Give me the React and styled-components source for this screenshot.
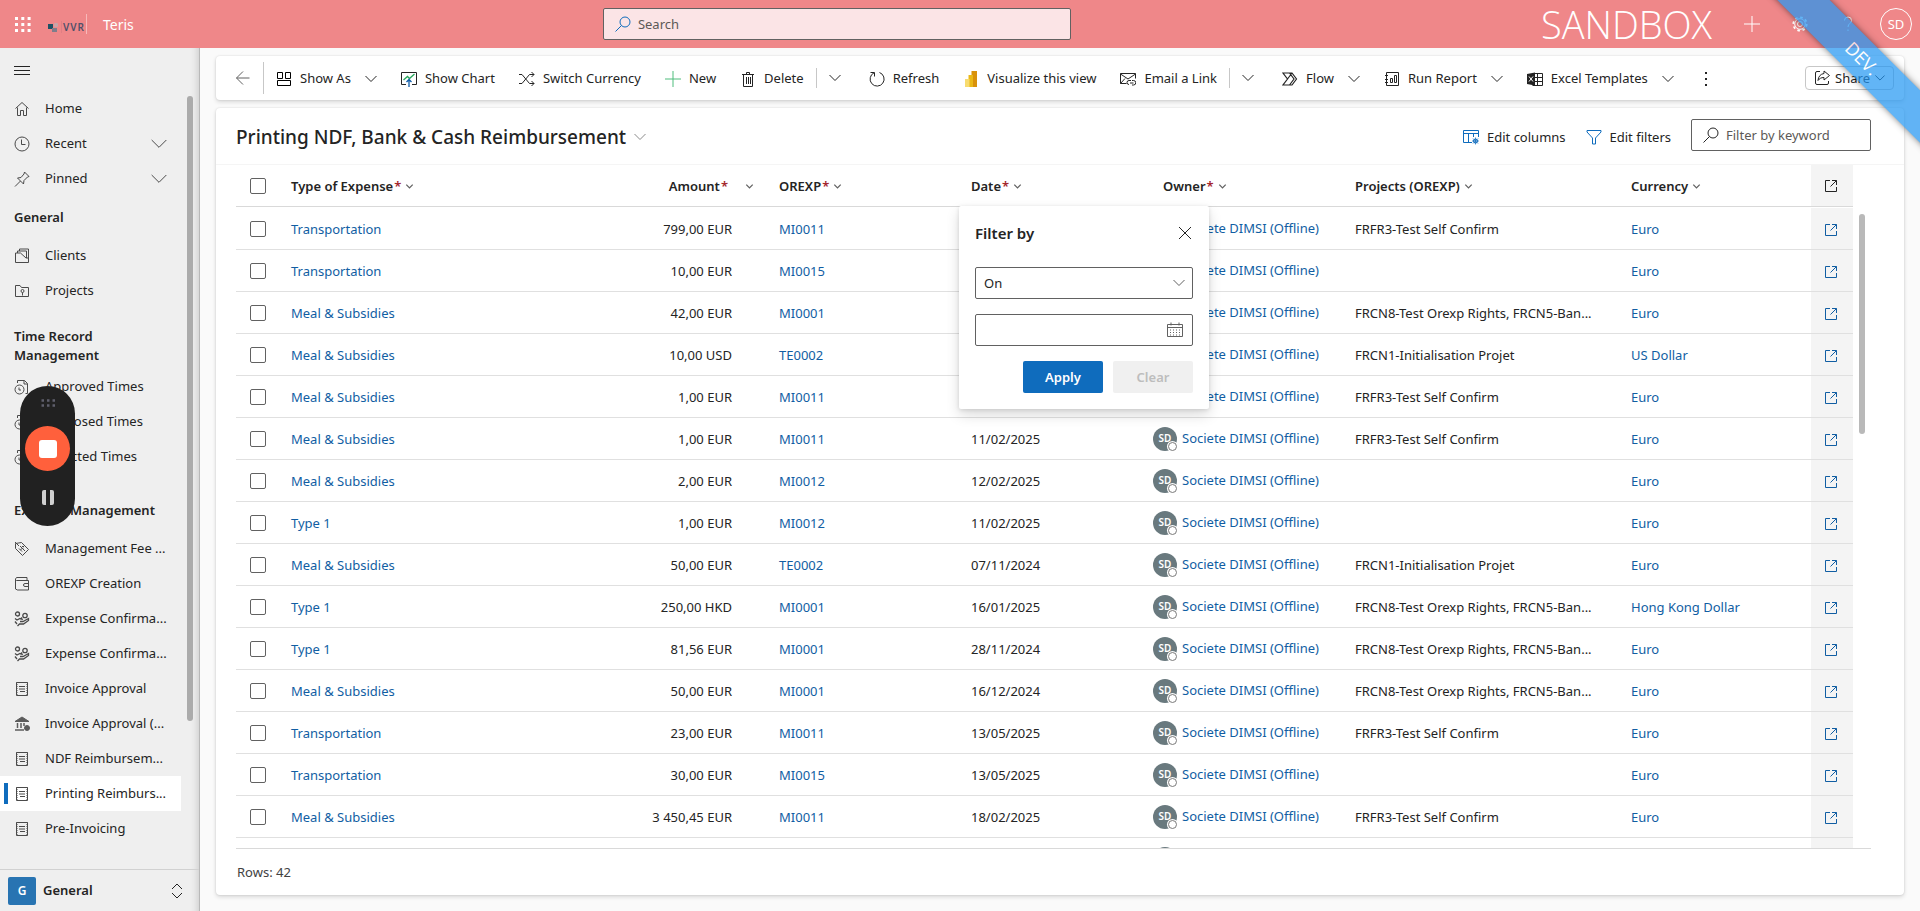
import { styled, createGlobalStyle } from "styled-components";

const GlobalStyle = createGlobalStyle`
  *, *::before, *::after {
    box-sizing: border-box;
  }

  :root {
    --color-brand: #ef8789;
    --color-text: #242424;
    --color-link: #115ea3;
    --color-accent: #0f6cbd;
    --color-line: #e0e0e0;
    --color-border: #616161;
    --color-nav: #efefef;
  }

  body {
    margin: 0;
    background-color: #fafafa;
    color: var(--color-text);
    font-family: "Noto Sans", "Open Sans", sans-serif;
    font-size: 13px;
    line-height: 19px;
  }

  button, input, select {
    font: inherit;
    color: inherit;
  }

  button {
    padding: 0;
    border: none;
    background: none;
    cursor: pointer;
  }

  a {
    color: var(--color-link);
    text-decoration: none;
  }
`;

/* ---------- icons ---------- */

const Svg = styled.svg`
  flex: none;
  display: block;
  fill: none;
  stroke: currentColor;
  stroke-width: 1;
`;

const ICONS = {
  home: <path d="M1.500 7.500L8 1.500l6.500 6M3.500 6.500v8h3v-5h3v5h3v-8" />,
  recent: (
    <>
      <circle cx="8" cy="8" r="7" />
      <path d="M7.500 3.500v5h4" />
    </>
  ),
  pin: <path d="M10.500 1l4.500 4.500-1.500.5-3.500 3.500-.5 3.500-6-6 3.500-.5L10 3zM6.500 10L1 15.500" />,
  clients: <path d="M1.500 5v9.500h13V10H12L6.500 5zM3.500 5V3h9v7M5.500 3V1h9v9" />,
  folder: (
    <>
      <path d="M1.500 13.500v-11H6l1.500 2h7v9z" />
      <circle cx="8.500" cy="8" r="1.500" />
      <path d="M8.500 9.500v3" />
    </>
  ),
  timeDoc: (
    <>
      <circle cx="5.500" cy="10.500" r="4.500" />
      <path d="M5 8.500v2.500h2M3.500 4V1.500h7l3 3v10h-2M10 1.500V5h3.500" />
    </>
  ),
  tag: (
    <>
      <path d="M1.500 2.500l6-1 7 7-6 6-7-7zM1 1l4 4" />
      <path d="M6 5l5 5M5 7.500l3 3M8 5.500l2 0M6.500 8.500l3-1.500" />
    </>
  ),
  wallet: (
    <>
      <path d="M2.500 4.500h12v9.500h-11L1.500 13V3l1-1.500h10.500v3M1.500 3.500l1 1" />
      <path d="M14.500 7.500H11a1.500 1.500 0 000 3h3.500" />
    </>
  ),
  handCoins: (
    <g strokeWidth="1.300">
      <circle cx="3.500" cy="3" r="2" />
      <circle cx="11" cy="4.500" r="2.200" />
      <path d="M1 7.500l2 1.500 3-1.500 3 1M6 10.500h3l5.500-3v2L9.500 13H5.500l-2 2M1 10.500l2 2.500M8 6.500l-1.500 2" />
    </g>
  ),
  invoice: (
    <>
      <path d="M2.500 1.500h11v13h-11z" />
      <path d="M3 1v14M13 1v14" strokeDasharray="1 1" />
      <path d="M5 5.500h6M5 8h6M6 10.500h5" />
    </>
  ),
  bank: (
    <g color="#5c5c5c">
      <path d="M1 5.500L8 1l7 4.500z" fill="currentColor" />
      <path d="M3.500 7v5M7 7v5M10 7v3" strokeWidth="1.500" />
      <path d="M1 14h9" strokeWidth="1.500" />
      <circle cx="13" cy="12" r="2.500" fill="currentColor" />
    </g>
  ),
  back: <path d="M14.500 8H1.500M8 1.500L1.500 8 8 14.500" />,
  showAs: <path d="M1.500 1.500h5v6h-5zM9.500 1.500h5v6h-5zM1.500 9.500h13v5h-13z" stroke="#000" />,
  chart: (
    <>
      <path d="M5 13.500H.5v-12h15v12H11" />
      <path d="M2.500 9l4-3.500 2 2 5-4.500" stroke="#27a75c" strokeWidth="1.300" />
      <path d="M8 16V9M5.500 11L8 8.500l2.500 2.500" stroke="#0f5ba8" strokeWidth="1.300" />
    </>
  ),
  shuffle: <path d="M0 12.500h3l7.500-9H15M0 3.500h3l7.500 9H15M12.500 1L15 3.500 12.500 6M12.500 10l2.500 2.500L12.500 15" />,
  plus: <path d="M8 0v16M0 8h16" />,
  trash: <path d="M2 3.500h12M6.500 3V1.500h3V3M3.500 3.500v12h9v-12M6.500 6v7M8.500 6v7M10.500 6v7" />,
  refresh: <path d="M10.500 1.500A7 7 0 115 1.800M1.500 1.500H5.500V5.500" />,
  powerBi: (
    <g stroke="none">
      <path d="M8.500 0H14v16H8.500z" fill="#d9920b" />
      <path d="M5.500 4H10v12H5.500z" fill="#eab818" />
      <path d="M2 8h4.500v8H2z" fill="#f8dc70" />
    </g>
  ),
  mailLink: (
    <>
      <path d="M6.500 12.500H.5v-10h15v5M.5 3L8 8l7.500-5M.5 12.500L5 7.500" />
      <path d="M9 13.500a2 2 0 010-4h2M12 9.500h1.500a2 2 0 010 4.500H12M10 12h3.500" />
    </>
  ),
  flow: <path d="M1 2h9l4.500 6-4.500 6H1l4.500-6zM7.500 2L12 8l-4.500 6M1 14L10 2" strokeWidth="1.200" />,
  report: (
    <>
      <path d="M2.500 1.500h12v13h-12zM1 4.500h3M1 8.500h3M1 11.500h3" />
      <path d="M6.500 7.500h2v4h-2zM10.500 4.500h2v7h-2z" />
    </>
  ),
  excel: (
    <>
      <path d="M5.500 2.500h10v12h-10M5.500 6.500h10M5.500 10.500h10M10.500 2.500v12" />
      <path d="M0 3l8-1.500v13L0 13z" fill="currentColor" stroke="none" />
      <path d="M2 5.500l4 5M6 5.500l-4 5" stroke="#fff" />
    </>
  ),
  more: <path d="M8 1v2M8 7v2M8 13v2" strokeWidth="2" />,
  share: (
    <>
      <path d="M6 1.500H3a1.500 1.500 0 00-1.500 1.500v10A1.500 1.500 0 003 14.500h10a1.500 1.500 0 001.500-1.500v-2" />
      <path d="M10 1l5.500 4.500L10 10V7.500c-3 0-4.500 1-6 3 .3-4 2.500-6.500 6-7z" />
    </>
  ),
  columns: (
    <>
      <path d="M9 13.500H.5v-12h15V8M.5 4.500h15M5.500 4.500v9M10.500 4.500V8" />
      <circle cx="12.500" cy="12" r="2" />
      <path d="M12.500 8.500v7M9 12h7M10 9.500l5 5M15 9.500l-5 5" strokeWidth=".7" />
    </>
  ),
  filter: <path d="M1 1.500h14v1.500L9.500 9v6h-3V9L1 3z" />,
  search: (
    <>
      <circle cx="10" cy="6" r="5" />
      <path d="M6.500 9.500L.5 15.500" />
    </>
  ),
  close: <path d="M2 2l12 12M14 2L2 14" />,
  open: (
    <>
      <path d="M7 2.500H2.500v11h11V9" />
      <path d="M9 2.500h4.500V7M13.500 2.500l-6 6" />
    </>
  ),
  calendar: (
    <>
      <path d="M.5 2.500h15v12H.5zM.5 5.500h15M4 .5v3M12 .5v3" />
      <path d="M3 8h10.500M3 10.500h10.500M3 13h10.500" strokeDasharray="1 2" />
    </>
  ),
  gear: (
    <>
      <circle cx="8" cy="8" r="2.500" />
      <circle cx="8" cy="8" r="5.300" />
      <circle cx="8" cy="8" r="6.700" strokeDasharray="2.600 2.660" strokeWidth="1.800" />
    </>
  ),
  help: <path d="M4.500 4.500a3.500 3.500 0 117 0c0 3-3.500 3-3.500 6.500M8 13.500v1.500" />,
  menu: <path d="M0 4.500h16M0 8.500h16M0 12.500h16" />,
  waffle: (
    <path
      d="M0 2.500h16M0 8.500h16M0 14.500h16"
      strokeDasharray="3 3.300"
      strokeWidth="3"
    />
  ),
};

function Icon({ name, size = 16, color }) {
  return (
    <Svg width={size} height={size} viewBox="0 0 16 16" color={color} aria-hidden="true">
      {ICONS[name]}
    </Svg>
  );
}

function Chevron({ size = 12, bold, color }) {
  return (
    <Svg width={size} height={size} viewBox="0 0 12 12" color={color} aria-hidden="true">
      <path d={bold ? "M2.500 4l3.500 3.500L9.500 4" : "M.5 3L6 8.500 11.500 3"} strokeWidth={bold ? 1.4 : 12 / size} />
    </Svg>
  );
}

/* ---------- top bar ---------- */

const Page = styled.div`
  position: relative;
  display: flex;
  flex-direction: column;
  height: 100vh;
  overflow: hidden;
`;

const StyledHeader = styled.header`
  display: grid;
  grid-template-columns: 71fr 468px 100fr;
  align-items: center;
  flex: none;
  height: 48px;
  background-color: var(--color-brand);
  color: #fff;
`;

const HeaderLeft = styled.div`
  display: flex;
  align-items: center;
  padding-left: 15px;
`;

const LogoLink = styled.a`
  display: flex;
  height: 20px;
  margin: 0 16px;
  border-right: 1px solid #f7b9ba;
`;

const AppName = styled.span`
  font-size: 14px;
`;

const HeaderRight = styled.div`
  display: flex;
  align-items: center;
  justify-content: flex-end;
  padding-right: 8px;
`;

const EnvironmentName = styled.span`
  font-family: "Open Sans", sans-serif;
  font-weight: 300;
  font-size: 38px;
  line-height: 48px;
  margin-right: 16px;
`;

const HeaderButton = styled.button`
  display: flex;
  align-items: center;
  justify-content: center;
  width: 48px;
  height: 48px;
`;

const Account = styled.button`
  width: 32px;
  height: 32px;
  margin-left: 8px;
  border: 1px solid #fff;
  border-radius: 50%;
`;

const SearchBox = styled.label`
  display: flex;
  align-items: center;
  gap: 7px;
  height: 32px;
  padding: 0 11px;
  border: 1px solid var(--color-border);
  border-radius: 2px;
  background-color: ${(props) => (props.$tinted ? "#fbe4e6" : "#fff")};
  color: ${(props) => (props.$tinted ? "var(--color-accent)" : "var(--color-text)")};
  width: ${(props) => (props.$tinted ? "auto" : "180px")};
`;

const SearchInput = styled.input`
  flex: 1;
  min-width: 0;
  padding: 0;
  border: none;
  outline: none;
  background: none;

  &::placeholder {
    color: #5c5957;
    opacity: 1;
  }
`;

function Logo() {
  return (
    <svg width="39" height="20" viewBox="0 0 39 20" aria-hidden="true">
      <rect x="1" y="10" width="5" height="5" fill="#1d5265" />
      <rect x="7" y="9" width="4" height="4" rx="1" fill="#c9a4a8" />
      <rect x="5" y="14" width="5" height="4" fill="#7f7d8b" />
      <path d="M14.500 7v12" stroke="#e07f83" />
      <text x="16" y="17" fontSize="10" fontWeight="600" fill="#51506a" letterSpacing="1">
        VVR
      </text>
    </svg>
  );
}

function Header() {
  return (
    <StyledHeader>
      <HeaderLeft>
        <button aria-label="App launcher">
          <Icon name="waffle" />
        </button>
        <LogoLink href="#" aria-label="Company">
          <Logo />
        </LogoLink>
        <AppName>Teris</AppName>
      </HeaderLeft>
      <SearchBox $tinted>
        <Icon name="search" />
        <SearchInput placeholder="Search" aria-label="Search" />
      </SearchBox>
      <HeaderRight>
        <EnvironmentName>SANDBOX</EnvironmentName>
        <HeaderButton aria-label="Create">
          <Icon name="plus" />
        </HeaderButton>
        <HeaderButton aria-label="Settings">
          <Icon name="gear" />
        </HeaderButton>
        <HeaderButton aria-label="Help">
          <Icon name="help" />
        </HeaderButton>
        <Account aria-label="Account">SD</Account>
      </HeaderRight>
    </StyledHeader>
  );
}

/* ---------- left navigation ---------- */

const StyledNav = styled.nav`
  display: flex;
  flex-direction: column;
  flex: none;
  width: 200px;
  background-color: var(--color-nav);
  border-right: 1px solid #b8b8b8;
  box-shadow: inset -10px 0 10px -10px rgba(0, 0, 0, 0.2);
`;

const NavToggle = styled.button`
  display: flex;
  align-items: center;
  flex: none;
  height: 43px;
  padding-left: 14px;
`;

const NavBody = styled.div`
  display: flex;
  flex: 1;
  min-height: 0;
  overflow: hidden;
`;

const NavScroll = styled.div`
  flex: 1;
  min-width: 0;
  overflow: hidden;
`;

const ScrollTrack = styled.div`
  flex: none;
  width: 18px;
  padding: ${(props) => (props.$grid ? "49px 6px 0" : "5px 6px 0")};
`;

const ScrollThumb = styled.div`
  width: 6px;
  height: ${(props) => (props.$grid ? "220px" : "625px")};
  border-radius: 3px;
  background-color: ${(props) => (props.$grid ? "#b9b9b9" : "#ababab")};
`;

const NavGroup = styled.ul`
  list-style: none;
  margin: ${(props) => (props.$spaced ? "15px 0 0" : "0")};
  padding: 0;
`;

const GroupTitle = styled.h2`
  display: flex;
  align-items: center;
  min-height: 42px;
  margin: 0;
  padding: 4px 60px 4px 14px;
  font-size: 13px;
  font-weight: 600;
  line-height: 19px;
  white-space: ${(props) => (props.$wrap ? "normal" : "nowrap")};
`;

const NavLink = styled.a`
  position: relative;
  display: flex;
  align-items: center;
  height: 35px;
  padding: 0 14px;
  gap: 15px;
  color: #4a4a4a;
  background-color: ${(props) => (props.$active ? "#fff" : "transparent")};

  &::before {
    content: "";
    position: absolute;
    left: 4px;
    width: 4px;
    height: 21px;
    background-color: ${(props) => (props.$active ? "var(--color-accent)" : "transparent")};
  }
`;

const NavLabel = styled.span`
  flex: 1;
  color: var(--color-text);
  white-space: nowrap;
`;

const AreaSwitcher = styled.button`
  display: flex;
  align-items: center;
  flex: none;
  gap: 7px;
  height: 42px;
  padding: 0 16px 0 8px;
  border-top: 1px solid #d1d1d1;
  font-weight: 600;
`;

const AreaBadge = styled.span`
  display: flex;
  align-items: center;
  justify-content: center;
  width: 28px;
  height: 28px;
  border-radius: 2px;
  background-color: #2874b2;
  color: #fff;
  font-size: 12px;
`;

const AreaName = styled.span`
  flex: 1;
  text-align: left;
`;

const navGroups = [
  {
    items: [
      { icon: "home", label: "Home" },
      { icon: "recent", label: "Recent", expandable: true },
      { icon: "pin", label: "Pinned", expandable: true },
    ],
  },
  {
    title: "General",
    items: [
      { icon: "clients", label: "Clients" },
      { icon: "folder", label: "Projects" },
    ],
  },
  {
    title: "Time Record Management",
    spaced: true,
    wrap: true,
    items: [
      { icon: "timeDoc", label: "Approved Times" },
      { icon: "timeDoc", label: "Proposed Times" },
      { icon: "timeDoc", label: "Rejected Times" },
    ],
  },
  {
    title: "Expense Management",
    spaced: true,
    items: [
      { icon: "tag", label: "Management Fee ..." },
      { icon: "wallet", label: "OREXP Creation" },
      { icon: "handCoins", label: "Expense Confirma..." },
      { icon: "handCoins", label: "Expense Confirma..." },
      { icon: "invoice", label: "Invoice Approval" },
      { icon: "bank", label: "Invoice Approval (..." },
      { icon: "invoice", label: "NDF Reimbursem..." },
      { icon: "invoice", label: "Printing Reimburs...", active: true },
      { icon: "invoice", label: "Pre-Invoicing" },
    ],
  },
];

function Navigation() {
  return (
    <StyledNav>
      <NavToggle aria-label="Collapse navigation">
        <Icon name="menu" />
      </NavToggle>
      <NavBody>
        <NavScroll>
          {navGroups.map((group, g) => (
            <NavGroup key={g} $spaced={group.spaced}>
              {group.title && <GroupTitle $wrap={group.wrap}>{group.title}</GroupTitle>}
              {group.items.map((item, i) => (
                <li key={i}>
                  <NavLink href="#" $active={item.active}>
                    <Icon name={item.icon} />
                    <NavLabel>{item.label}</NavLabel>
                    {item.expandable && <Chevron size={16} />}
                  </NavLink>
                </li>
              ))}
            </NavGroup>
          ))}
        </NavScroll>
        <ScrollTrack>
          <ScrollThumb />
        </ScrollTrack>
      </NavBody>
      <AreaSwitcher>
        <AreaBadge>G</AreaBadge>
        <AreaName>General</AreaName>
        <Svg width="12" height="16" viewBox="0 0 12 16" aria-hidden="true">
          <path d="M1 6l5-5 5 5M1 10l5 5 5-5" />
        </Svg>
      </AreaSwitcher>
    </StyledNav>
  );
}

/* ---------- command bar ---------- */

const CommandBar = styled.div`
  display: flex;
  align-items: center;
  flex: none;
  height: 44px;
  padding: 0 10px 0 16px;
  border-radius: 4px;
  background-color: #fff;
  box-shadow: 0 0 2px rgba(0, 0, 0, 0.12), 0 2px 4px rgba(0, 0, 0, 0.14);
`;

const BackButton = styled.button`
  display: flex;
  align-items: center;
  height: 32px;
  padding: 0 12px 0 3px;
  border-right: 1px solid #c7c7c7;
  color: #616161;
`;

const CommandButton = styled.button`
  display: flex;
  align-items: center;
  gap: 8px;
  height: 32px;
  padding: 1px 12px 0;
  white-space: nowrap;
`;

const SplitButton = styled.button`
  display: flex;
  align-items: center;
  height: 20px;
  padding: 0 16px 0 12px;
  border-left: 1px solid #c7c7c7;
`;

const CommandChevron = styled.span`
  margin-left: 6px;
`;

const ShareButton = styled.button`
  display: flex;
  align-items: center;
  gap: 5px;
  height: 24px;
  margin-left: auto;
  padding: 0 8px;
  border: 1px solid #c7c7c7;
  border-radius: 4px;
`;

const commands = [
  { icon: "showAs", label: "Show As", menu: true },
  { icon: "chart", label: "Show Chart" },
  { icon: "shuffle", label: "Switch Currency" },
  { icon: "plus", label: "New", color: "#4fbd7c" },
  { icon: "trash", label: "Delete", split: true },
  { icon: "refresh", label: "Refresh" },
  { icon: "powerBi", label: "Visualize this view" },
  { icon: "mailLink", label: "Email a Link", split: true },
  { icon: "flow", label: "Flow", menu: true },
  { icon: "report", label: "Run Report", menu: true },
  { icon: "excel", label: "Excel Templates", menu: true },
];

function Commands() {
  return (
    <CommandBar>
      <BackButton aria-label="Back">
        <Icon name="back" />
      </BackButton>
      {commands.map((command) => (
        <Command key={command.label} {...command} />
      ))}
      <CommandButton aria-label="More commands">
        <Icon name="more" />
      </CommandButton>
      <ShareButton>
        <Icon name="share" />
        Share
        <Chevron size={10} />
      </ShareButton>
    </CommandBar>
  );
}

function Command({ icon, label, color, menu, split }) {
  return (
    <>
      <CommandButton>
        <Icon name={icon} color={color} />
        {label}
        {menu && (
          <CommandChevron>
            <Chevron />
          </CommandChevron>
        )}
      </CommandButton>
      {split && (
        <SplitButton aria-label={`${label} options`}>
          <Chevron />
        </SplitButton>
      )}
    </>
  );
}

/* ---------- grid ---------- */

const Layout = styled.div`
  display: flex;
  flex: 1;
  min-height: 0;
`;

const Main = styled.main`
  display: flex;
  flex-direction: column;
  flex: 1;
  gap: 8px;
  min-width: 0;
  padding: 8px 16px 16px;
`;

const Card = styled.section`
  display: flex;
  flex-direction: column;
  flex: 1;
  min-height: 0;
  border-radius: 4px;
  background-color: #fff;
  box-shadow: 0 0 2px rgba(0, 0, 0, 0.12), 0 2px 4px rgba(0, 0, 0, 0.14);
`;

const CardHeader = styled.div`
  display: flex;
  align-items: center;
  flex: none;
  gap: 20px;
  height: 57px;
  padding: 0 33px 2px 20px;
  border-bottom: 1px solid #f5f5f5;
`;

const ViewSelector = styled.button`
  display: flex;
  align-items: center;
  gap: 8px;
  margin-right: auto;
  padding-top: 4px;
`;

const ViewTitle = styled.h1`
  margin: 0;
  font-size: 19px;
  font-weight: 500;
  line-height: 28px;
`;

const ViewAction = styled.button`
  display: flex;
  align-items: center;
  gap: 8px;
  padding-top: 4px;

  svg {
    color: var(--color-accent);
  }
`;

const GridArea = styled.div`
  display: flex;
  flex: 1;
  min-height: 0;
  margin: 0 33px 0 20px;
  border-bottom: 1px solid #d9d9d9;
`;

const GridScroll = styled.div`
  flex: 1;
  min-width: 0;
  overflow: hidden;
`;

const Table = styled.table`
  width: 100%;
  table-layout: fixed;
  border-collapse: separate;
  border-spacing: 0;
`;

const HeadCell = styled.th`
  position: relative;
  height: 42px;
  padding: 1px 12px 0;
  border-bottom: 1px solid #d9d9d9;
  background-color: ${(props) => (props.$shaded ? "#f4f4f4" : "#fff")};
  font-weight: 600;
  text-align: left;
`;

const SelectHeadCell = styled(HeadCell)`
  padding: 1px 14px 0;
`;

const SortButton = styled.button`
  display: flex;
  align-items: center;
  margin-left: ${(props) => (props.$end ? "auto" : "0")};
  font-weight: 600;
  white-space: nowrap;

  svg {
    margin-left: ${(props) => (props.$end ? "16px" : "3px")};
    color: #616161;
  }
`;

const Required = styled.span`
  margin-left: 1px;
  color: #a4262c;
`;

const Row = styled.tr`
  &:first-child td {
    border-top: 1px solid #fff;
  }
`;

const Cell = styled.td`
  height: 42px;
  padding: ${(props) => (props.$end ? "2px 35px 0 12px" : "2px 12px 0")};
  border-bottom: 1px solid var(--color-line);
  background-color: ${(props) => (props.$shaded ? "#f4f4f4" : "#fff")};
  text-align: ${(props) => (props.$end ? "right" : "left")};
  white-space: nowrap;
  overflow: hidden;

  ${Row}:first-child & {
    height: 43px;
  }
`;

const SelectCell = styled(Cell)`
  padding: 0 14px;
`;

const OwnerCell = styled(Cell)`
  padding: 0 2px;
`;

const Checkbox = styled.input.attrs({ type: "checkbox" })`
  display: block;
  appearance: none;
  width: 16px;
  height: 16px;
  margin: 0;
  border: 1px solid var(--color-border);
  border-radius: 2px;
  background-color: #fff;
`;

const OwnerLink = styled.a`
  display: flex;
  align-items: center;
  gap: 5px;
`;

const Persona = styled.span`
  position: relative;
  display: flex;
  align-items: center;
  justify-content: center;
  width: 24px;
  height: 24px;
  border-radius: 50%;
  background-color: #69797e;
  color: #fff;
  font-size: 10px;
  font-weight: 600;

  &::after {
    content: "";
    position: absolute;
    right: 0;
    bottom: 0;
    width: 9px;
    height: 9px;
    border: 1px solid #7a7a7a;
    border-radius: 50%;
    background-color: #fff;
    box-shadow: 0 0 0 1px #fff;
  }
`;

const CardFooter = styled.footer`
  flex: none;
  padding: 14px 21px 13px;
  color: #424242;
`;

const columns = [
  { label: "Type of Expense", required: true, width: 296 },
  { label: "Amount", required: true, end: true, width: 192 },
  { label: "OREXP", required: true, width: 192 },
  { label: "Date", required: true, width: 192, filter: true },
  { label: "Owner", required: true, width: 192 },
  { label: "Projects (OREXP)", width: 276 },
  { label: "Currency", width: 192 },
];

const OWNER = "Societe DIMSI (Offline)";

const rows = [
  ["Transportation", "799,00 EUR", "MI0011", "", "FRFR3-Test Self Confirm", "Euro"],
  ["Transportation", "10,00 EUR", "MI0015", "", "", "Euro"],
  ["Meal & Subsidies", "42,00 EUR", "MI0001", "", "FRCN8-Test Orexp Rights, FRCN5-Ban...", "Euro"],
  ["Meal & Subsidies", "10,00 USD", "TE0002", "", "FRCN1-Initialisation Projet", "US Dollar"],
  ["Meal & Subsidies", "1,00 EUR", "MI0011", "", "FRFR3-Test Self Confirm", "Euro"],
  ["Meal & Subsidies", "1,00 EUR", "MI0011", "11/02/2025", "FRFR3-Test Self Confirm", "Euro"],
  ["Meal & Subsidies", "2,00 EUR", "MI0012", "12/02/2025", "", "Euro"],
  ["Type 1", "1,00 EUR", "MI0012", "11/02/2025", "", "Euro"],
  ["Meal & Subsidies", "50,00 EUR", "TE0002", "07/11/2024", "FRCN1-Initialisation Projet", "Euro"],
  ["Type 1", "250,00 HKD", "MI0001", "16/01/2025", "FRCN8-Test Orexp Rights, FRCN5-Ban...", "Hong Kong Dollar"],
  ["Type 1", "81,56 EUR", "MI0001", "28/11/2024", "FRCN8-Test Orexp Rights, FRCN5-Ban...", "Euro"],
  ["Meal & Subsidies", "50,00 EUR", "MI0001", "16/12/2024", "FRCN8-Test Orexp Rights, FRCN5-Ban...", "Euro"],
  ["Transportation", "23,00 EUR", "MI0011", "13/05/2025", "FRFR3-Test Self Confirm", "Euro"],
  ["Transportation", "30,00 EUR", "MI0015", "13/05/2025", "", "Euro"],
  ["Meal & Subsidies", "3 450,45 EUR", "MI0011", "18/02/2025", "FRFR3-Test Self Confirm", "Euro"],
  ["", "", "", "", "", ""],
];

function ExpenseGrid() {
  return (
    <Table>
      <colgroup>
        <col width="43" />
        {columns.map((column) => (
          <col key={column.label} width={column.width} />
        ))}
        <col width="42" />
      </colgroup>
      <thead>
        <tr>
          <SelectHeadCell>
            <Checkbox aria-label="Select all rows" />
          </SelectHeadCell>
          {columns.map((column) => (
            <HeadCell key={column.label}>
              <SortButton $end={column.end}>
                {column.label}
                {column.required && <Required>*</Required>}
                <Chevron size={11} bold />
              </SortButton>
              {column.filter && <DateFilter />}
            </HeadCell>
          ))}
          <HeadCell $shaded>
            <Icon name="open" />
          </HeadCell>
        </tr>
      </thead>
      <tbody>
        {rows.map((row, i) => (
          <ExpenseRow key={i} row={row} />
        ))}
      </tbody>
    </Table>
  );
}

function ExpenseRow({ row }) {
  const [type, amount, orexp, date, projects, currency] = row;
  return (
    <Row>
      <SelectCell>
        <Checkbox aria-label="Select row" />
      </SelectCell>
      <Cell>
        <a href="#">{type}</a>
      </Cell>
      <Cell $end>{amount}</Cell>
      <Cell>
        <a href="#">{orexp}</a>
      </Cell>
      <Cell>{date}</Cell>
      <OwnerCell>
        <OwnerLink href="#">
          <Persona>{type && "SD"}</Persona>
          {type && OWNER}
        </OwnerLink>
      </OwnerCell>
      <Cell>{projects}</Cell>
      <Cell>
        <a href="#">{currency}</a>
      </Cell>
      <Cell $shaded>
        {type && (
          <a href="#" aria-label="Open record">
            <Icon name="open" />
          </a>
        )}
      </Cell>
    </Row>
  );
}

/* ---------- date filter callout ---------- */

const Callout = styled.div`
  position: absolute;
  top: 41px;
  left: 0;
  z-index: 5;
  width: 250px;
  padding: 16px;
  border-radius: 2px;
  background-color: #fff;
  box-shadow: 0 6px 14px rgba(0, 0, 0, 0.14), 0 1px 4px rgba(0, 0, 0, 0.12);
`;

const CalloutHeader = styled.div`
  display: flex;
  align-items: center;
  justify-content: space-between;
  height: 22px;
  margin-bottom: 23px;
  font-size: 15px;
`;

const Field = styled.div`
  position: relative;
  display: flex;
  align-items: center;
  height: 32px;
  margin-bottom: 15px;
  border: 1px solid var(--color-border);
  border-radius: 2px;
  font-weight: 400;
`;

const FieldIcon = styled.span`
  position: absolute;
  right: ${(props) => props.$inset || 7}px;
  color: #616161;
  pointer-events: none;
`;

const Select = styled.select`
  appearance: none;
  width: 100%;
  height: 100%;
  padding: 0 8px;
  border: none;
  outline: none;
  background: none;
`;

const DateInput = styled.input`
  width: 100%;
  height: 100%;
  padding: 0 32px 0 8px;
  border: none;
  outline: none;
  background: none;
`;

const CalloutActions = styled.div`
  display: flex;
  justify-content: flex-end;
  gap: 10px;
`;

const CalloutButton = styled.button`
  width: 80px;
  height: 32px;
  border-radius: 2px;
  background-color: ${(props) => (props.disabled ? "#f0f0f0" : "var(--color-accent)")};
  color: ${(props) => (props.disabled ? "#bdbdbd" : "#fff")};
  font-weight: 600;
`;

function DateFilter() {
  return (
    <Callout>
      <CalloutHeader>
        Filter by
        <button aria-label="Close">
          <Icon name="close" />
        </button>
      </CalloutHeader>
      <Field>
        <Select aria-label="Filter operator" defaultValue="on">
          <option value="on">On</option>
        </Select>
        <FieldIcon>
          <Chevron />
        </FieldIcon>
      </Field>
      <Field>
        <DateInput type="text" aria-label="Date" />
        <FieldIcon $inset={9}>
          <Icon name="calendar" />
        </FieldIcon>
      </Field>
      <CalloutActions>
        <CalloutButton>Apply</CalloutButton>
        <CalloutButton disabled>Clear</CalloutButton>
      </CalloutActions>
    </Callout>
  );
}

/* ---------- overlays ---------- */

const RibbonCorner = styled.div`
  position: absolute;
  top: 0;
  right: 0;
  z-index: 10;
  width: 200px;
  height: 200px;
  overflow: hidden;
  pointer-events: none;
`;

const Ribbon = styled.div`
  position: absolute;
  top: 40px;
  left: 2px;
  width: 280px;
  transform: rotate(45deg);
  background-color: #2196f3;
  box-shadow: 0 0 6px rgba(0, 0, 0, 0.7);
  color: #fff;
  font-family: "Open Sans", sans-serif;
  font-size: 18px;
  font-weight: 500;
  line-height: 37px;
  text-align: center;
  opacity: 0.7;
`;

const Recorder = styled.div`
  position: absolute;
  top: 386px;
  left: 20px;
  z-index: 10;
  display: flex;
  flex-direction: column;
  align-items: center;
  justify-content: space-between;
  width: 55px;
  height: 140px;
  padding: 13px 0 21px;
  border-radius: 28px;
  background-color: #212121;
`;

const StopButton = styled.button`
  display: flex;
  align-items: center;
  justify-content: center;
  width: 45px;
  height: 45px;
  border-radius: 50%;
  background-color: #ff603c;

  &::before {
    content: "";
    width: 18px;
    height: 18px;
    border-radius: 3px;
    background-color: #fff;
  }
`;

const PauseButton = styled.button`
  width: 12px;
  height: 15px;
  border: solid #d0d0d0;
  border-width: 0 4px;
  border-radius: 2px;
`;

function ScreenRecorder() {
  return (
    <Recorder>
      <Svg width="14" height="8" viewBox="0 0 14 8" color="#5f5f6c" aria-hidden="true">
        <path d="M.5 1.500h14M.5 6.500h14" strokeWidth="2.500" strokeDasharray="2.500 3" />
      </Svg>
      <StopButton aria-label="Stop recording" />
      <PauseButton aria-label="Pause recording" />
    </Recorder>
  );
}

function App() {
  return (
    <Page>
      <GlobalStyle />
      <Header />
      <Layout>
        <Navigation />
        <Main>
          <Commands />
          <Card>
            <CardHeader>
              <ViewSelector>
                <ViewTitle>Printing NDF, Bank &amp; Cash Reimbursement</ViewTitle>
                <Chevron color="#8a8a8a" />
              </ViewSelector>
              <ViewAction>
                <Icon name="columns" />
                Edit columns
              </ViewAction>
              <ViewAction>
                <Icon name="filter" />
                Edit filters
              </ViewAction>
              <SearchBox>
                <Icon name="search" />
                <SearchInput placeholder="Filter by keyword" aria-label="Filter by keyword" />
              </SearchBox>
            </CardHeader>
            <GridArea>
              <GridScroll>
                <ExpenseGrid />
              </GridScroll>
              <ScrollTrack $grid>
                <ScrollThumb $grid />
              </ScrollTrack>
            </GridArea>
            <CardFooter>Rows: 42</CardFooter>
          </Card>
        </Main>
      </Layout>
      <RibbonCorner>
        <Ribbon>DEV.</Ribbon>
      </RibbonCorner>
      <ScreenRecorder />
    </Page>
  );
}

export default App;
